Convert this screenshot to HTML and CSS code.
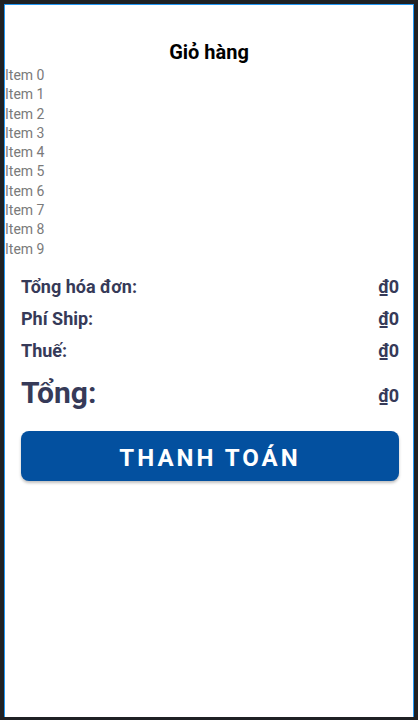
FILE: index.html
```html
<!DOCTYPE html>
<html lang="vi">
<head>
  <meta charset="UTF-8">
  <meta name="viewport" content="width=device-width, initial-scale=1.0">
  <title>Giỏ hàng</title>
  <link rel="stylesheet" href="styles.css">
</head>
<body>
  <div class="screen">
    <h1 class="title">Giỏ hàng</h1>

    <ul class="item-list">
      <li>Item 0</li>
      <li>Item 1</li>
      <li>Item 2</li>
      <li>Item 3</li>
      <li>Item 4</li>
      <li>Item 5</li>
      <li>Item 6</li>
      <li>Item 7</li>
      <li>Item 8</li>
      <li>Item 9</li>
    </ul>

    <div class="summary">
      <div class="summary-row">
        <span class="label">Tổng hóa đơn:</span>
        <span class="value">₫0</span>
      </div>
      <div class="summary-row">
        <span class="label">Phí Ship:</span>
        <span class="value">₫0</span>
      </div>
      <div class="summary-row">
        <span class="label">Thuế:</span>
        <span class="value">₫0</span>
      </div>
      <div class="summary-row total">
        <span class="label">Tổng:</span>
        <span class="value">₫0</span>
      </div>

      <button class="checkout-btn">THANH TOÁN</button>
    </div>
  </div>
</body>
</html>
```

FILE: styles.css
```css
html, body {
  height: 100%;
}
body {
  margin: 0;
  padding: 4px 4px 3px 4px;
  box-sizing: border-box;
  background-color: #1f2124;
  font-family: Roboto, "Noto Sans", sans-serif;
}
.screen {
  height: 100%;
  box-sizing: border-box;
  background-color: #fff;
  border: 1px solid #2196f3;
  border-bottom: none;
  padding-top: 34px;
}
.title {
  margin: 0;
  font-size: 20px;
  line-height: 27px;
  font-weight: 700;
  color: #000;
  text-align: center;
}
.item-list {
  list-style: none;
  margin: 0;
  padding: 0;
}
.item-list li {
  font-size: 14px;
  line-height: 19.3px;
  color: #7a7a7a;
}
.summary {
  padding: 12px 14px 0 16px;
}
.summary-row {
  display: flex;
  justify-content: space-between;
  align-items: center;
  height: 32px;
  color: #363a58;
  font-weight: 700;
  font-size: 18px;
}
.summary-row.total {
  height: 52px;
}
.summary-row.total .label {
  font-size: 30px;
  font-weight: 700;
}
.summary-row.total .value {
  padding-top: 6px;
}
.checkout-btn {
  display: block;
  width: 100%;
  height: 50px;
  margin-top: 12px;
  padding-top: 6px;
  background-color: #03509f;
  color: #fff;
  border: none;
  border-radius: 8px;
  box-shadow: 0 2px 3px rgba(0, 0, 0, 0.25);
  font-family: Roboto, "Noto Sans", sans-serif;
  font-size: 24px;
  font-weight: 700;
  letter-spacing: 3px;
  cursor: pointer;
}
```
